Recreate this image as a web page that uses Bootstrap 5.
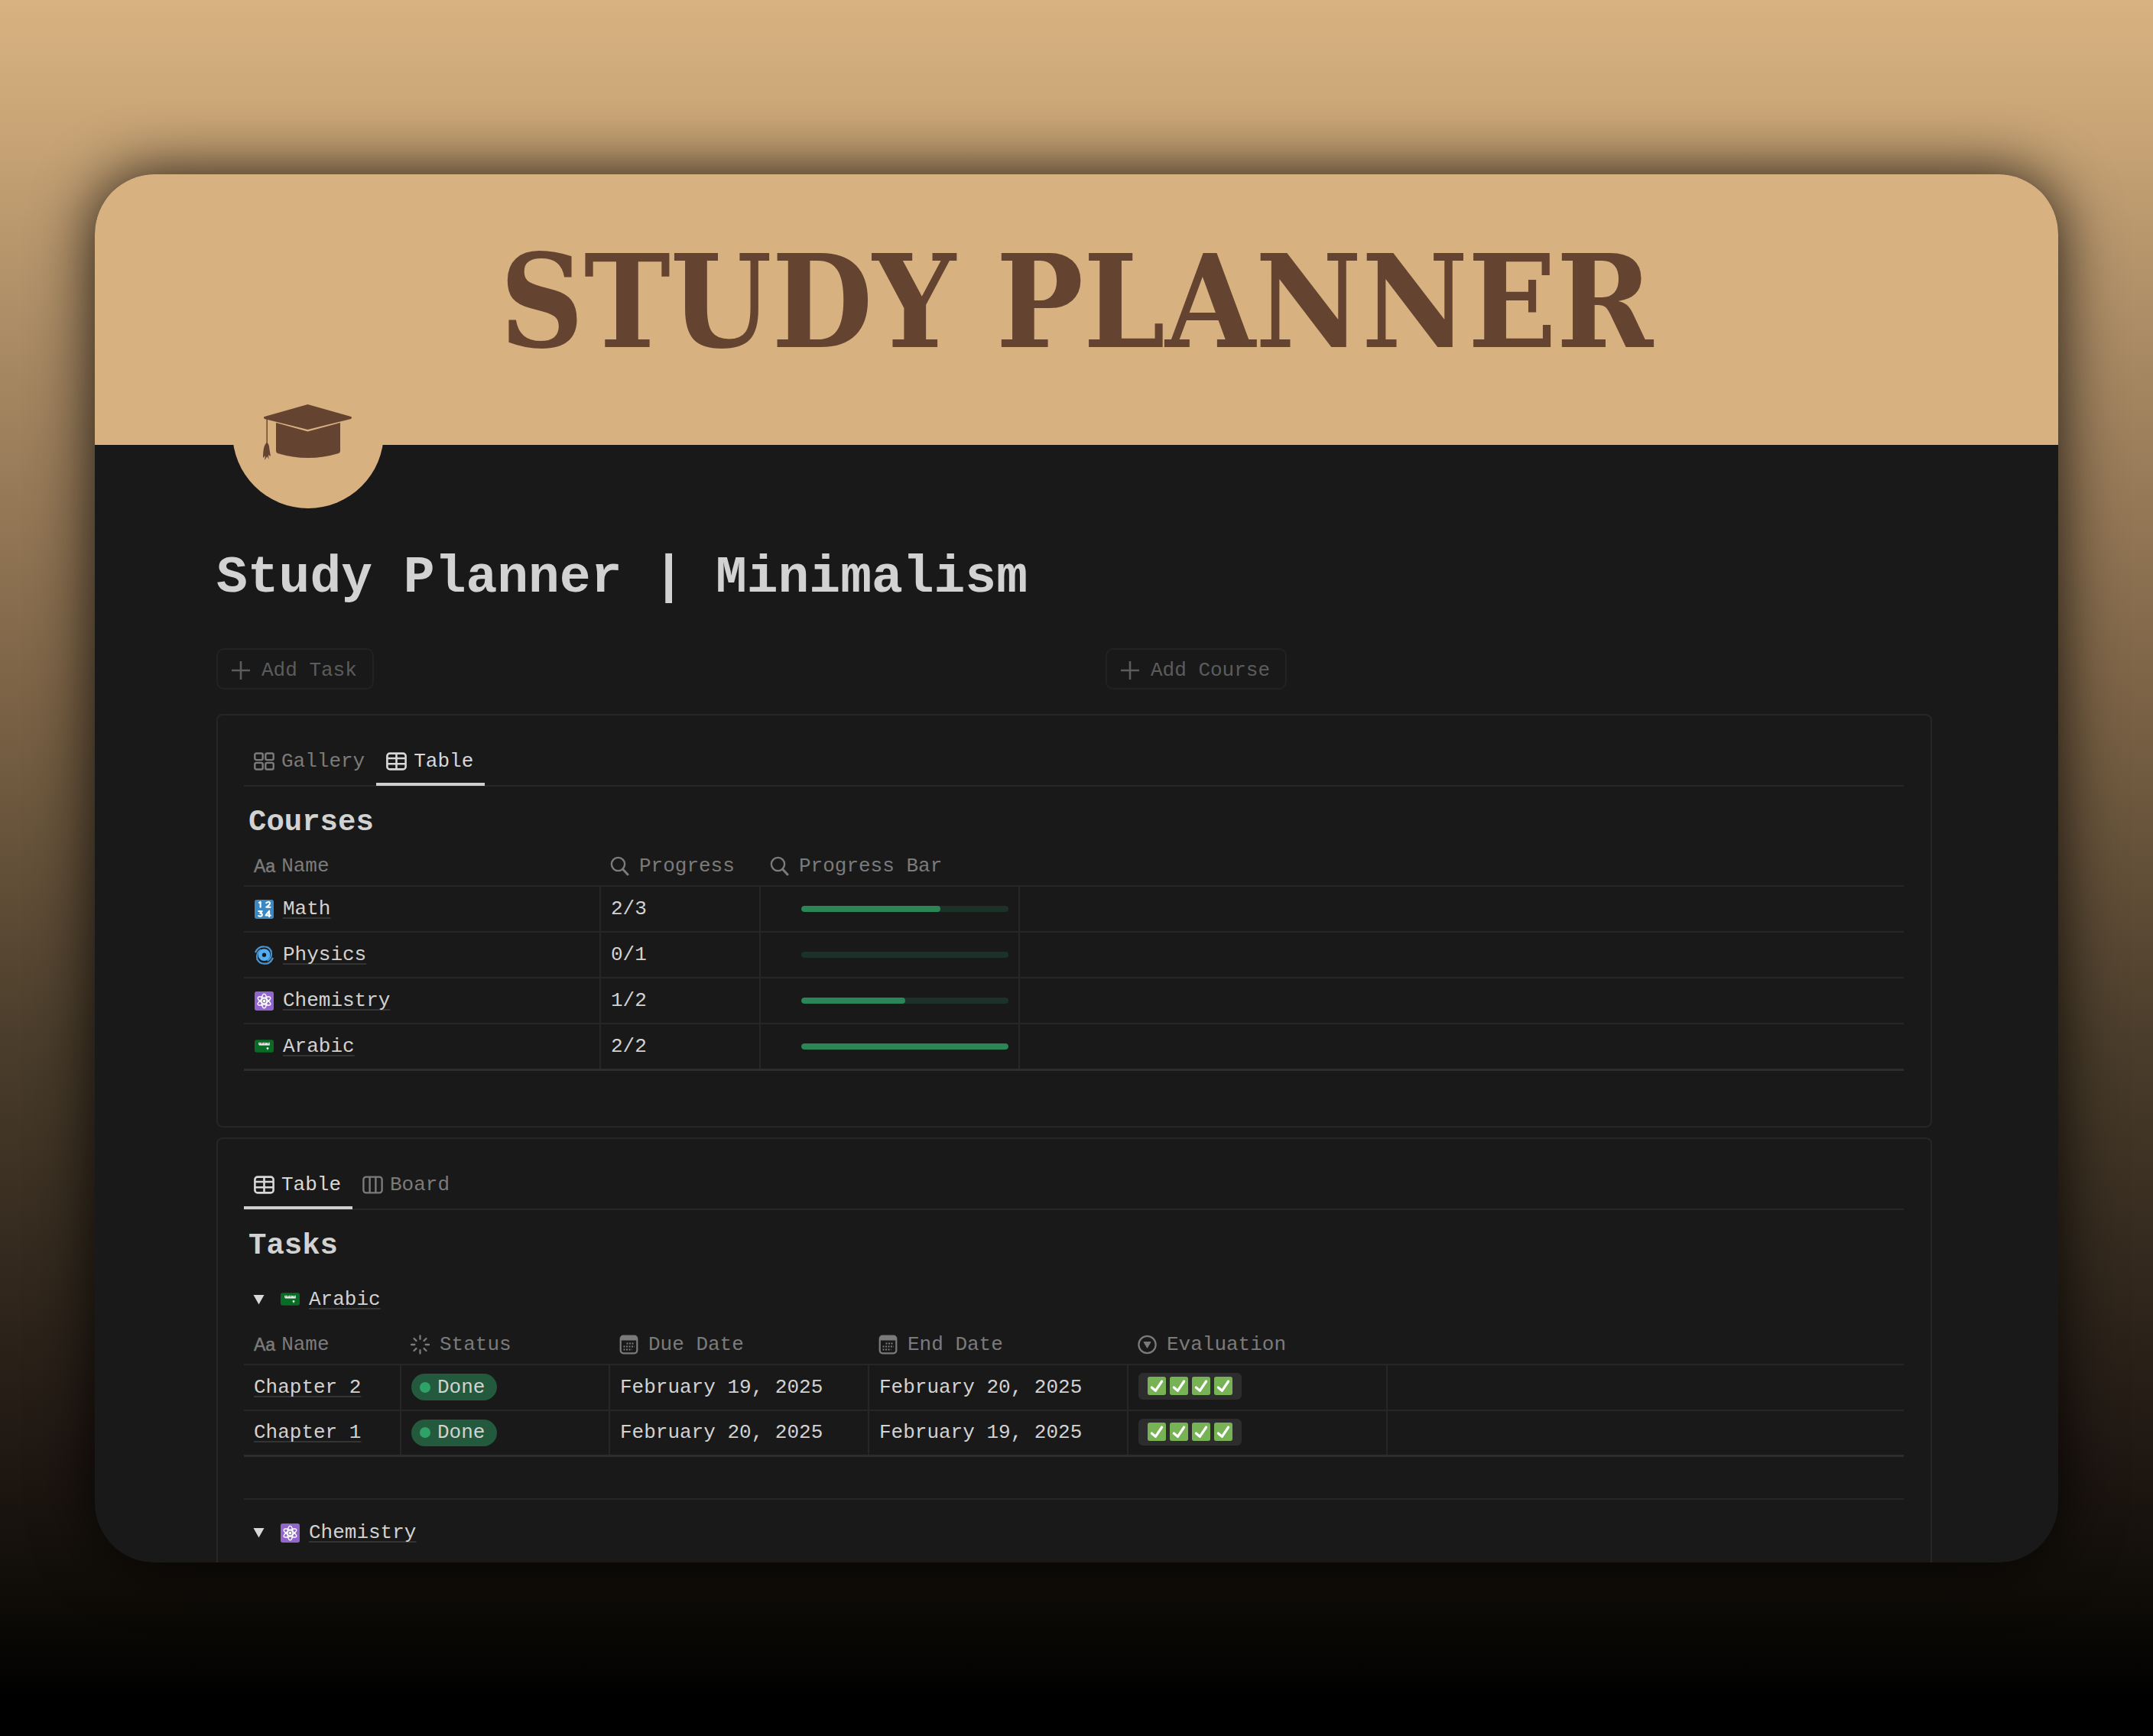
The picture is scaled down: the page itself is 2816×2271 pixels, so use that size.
<!DOCTYPE html>
<html lang="en">
<head>
<meta charset="utf-8">
<meta name="viewport" content="width=device-width, initial-scale=1">
<title>Study Planner | Minimalism</title>
<link rel="stylesheet" href="https://cdn.jsdelivr.net/npm/bootstrap@5.3.0/dist/css/bootstrap.min.css">
<style>
:root { --tan: #d7b180; --brown: #654331; --ink: #191919; --line: #262626; --muted: #7b7b7b; --txt: #d2d2d2; }
body {
  min-height: 100vh; padding: 228px 124px 229px; color: var(--txt);
  font: 26px/30px "Liberation Mono", monospace;
  background: #000 linear-gradient(180deg, #d8b281 0%, #c7a375 8%, #a98a64 20%, #7c6346 40%, #4a3d2b 60%, #1f1712 84%, #110e09 91%, #000 98%) no-repeat;
}
.window { background: var(--ink); border-radius: 78px; overflow: hidden; box-shadow: 0 0 80px rgba(0,0,0,.85); }
.cover { height: 354px; background: var(--tan); color: var(--brown); padding-top: 67px; font: bold 169px/200px "DejaVu Serif Condensed", "DejaVu Serif", serif; white-space: nowrap; }
.page { padding: 0 165px 0 159px; }
.page-icon { position: absolute; left: 180px; top: 239px; width: 198px; height: 198px; border-radius: 50%; background: var(--tan); }
h1 { font-size: 68px; line-height: 82px; font-weight: 700; margin: 133px 0 51px; }
h2 { font-size: 39px; line-height: 46px; font-weight: 700; margin: 24px 6px 0; }
.actions { gap: 82px; margin-bottom: 32px; }
.btn-add { --bs-btn-color: #5c5c5c; --bs-btn-border-color: #222; --bs-btn-hover-color: #999; --bs-btn-hover-border-color: #333; font-size: 26px; line-height: 30px; border-width: 2px; border-radius: 10px; padding: 12px 20px 8px 18px; gap: 15px; }
.panel { border: 2px solid var(--line); border-radius: 8px; padding: 45px 35px 72px 34px; margin-bottom: 13px; }
.panel-last { border-bottom: 0; border-radius: 8px 8px 0 0; padding-bottom: 24px; margin-bottom: 0; }
.views { border-bottom: 2px solid var(--line); }
.views .nav-link { display: flex; align-items: center; gap: 9px; color: var(--muted); padding: 0 15px 13px 13px; border: 0; border-bottom: 4px solid transparent; border-radius: 0; margin-bottom: -1px; }
.views .nav-link.active { color: #d8d8d8; border-bottom-color: #cfcfcf; }
.views svg { width: 27px; height: 24px; }
.db { --bs-table-bg: transparent; --bs-table-color: var(--txt); color: var(--txt); table-layout: fixed; margin: 0; border-color: var(--line); }
.db > :not(caption) > * > * { border: 0 solid var(--line); border-bottom-width: 2px; padding: 0 13px; vertical-align: middle; height: 60px; white-space: nowrap; }
.db > thead > tr > th { vertical-align: bottom; padding-bottom: 10px; color: var(--muted); font-weight: 400; }
.db > tbody > tr > td:not(:last-child) { border-right-width: 2px; }
.db > tbody > tr:last-child > td { border-bottom-width: 3px; border-bottom-color: #2d2d2d; }
.hd { display: flex; align-items: center; gap: 13px; }
.hd svg { width: 25px; height: 26px; }
.hd-name { gap: 8px; }
.hd-name i { font: 23px/30px "Liberation Sans", sans-serif; -webkit-text-stroke: .5px; }
.entry { display: flex; align-items: center; gap: 12px; }
.entry svg, .checks svg { width: 25px; height: 25px; }
.entry.course { padding-left: 1px; }
.page-link-text { color: var(--txt); text-decoration: underline #343434 2px; text-underline-offset: 4px; text-decoration-skip-ink: none; }
.course-bar { height: 8px; margin-left: 40px; background: #1c3127; border-radius: 5px; }
.course-bar .progress-bar { background: #2a8657; border-radius: 5px; }
.done { display: inline-flex; align-items: center; gap: 9px; height: 35px; padding: 0 16px 0 11px; border-radius: 18px; background: #235a3e; }
.done::before { content: ""; width: 14px; height: 14px; border-radius: 50%; background: #2fa367; }
.checks { display: inline-flex; align-items: center; gap: 5px; height: 35px; padding: 0 12px; border-radius: 6px; background: #2d2d2d; }
.checks svg { width: 24px; height: 24px; }
.group { margin: 32px 12px 10px; display: flex; align-items: center; gap: 21px; }
.group button { border: 0; background: none; padding: 0; width: 15px; display: flex; }
.divide { border-top: 2px solid var(--line); margin-top: 54px; padding-top: 28px; }
.divide .group { margin-top: 0; margin-bottom: 0; }
.w-name { width: 466px; } .w-prog { width: 209px; } .w-wide { width: 339px; } .w-task { width: 205px; } .w-stat { width: 273px; }
</style>
<script src="https://cdn.jsdelivr.net/npm/bootstrap@5.3.0/dist/js/bootstrap.bundle.min.js"></script>
</head>
<body>
<svg class="d-none" aria-hidden="true">
  <symbol id="i-plus" viewBox="0 0 24 24"><path d="M12 0v24M0 12h24" stroke="currentColor" stroke-width="2.6"/></symbol>
  <symbol id="i-gallery" viewBox="0 0 27 24"><g fill="none" stroke="currentColor" stroke-width="2.4"><rect x="1.3" y="1.5" width="10.4" height="8.6" rx="2"/><rect x="15.3" y="1.5" width="10.4" height="8.6" rx="2"/><rect x="1.3" y="13.9" width="10.4" height="8.6" rx="2"/><rect x="15.3" y="13.9" width="10.4" height="8.6" rx="2"/></g></symbol>
  <symbol id="i-table" viewBox="0 0 27 24"><g fill="none" stroke="currentColor" stroke-width="2.6"><rect x="1.4" y="1.6" width="24.2" height="20.8" rx="3.5"/><path d="M1.4 8h24.2M1.4 15.2h24.2M13.5 2v20"/></g></symbol>
  <symbol id="i-board" viewBox="0 0 27 24"><g fill="none" stroke="currentColor" stroke-width="2.4"><rect x="1.4" y="1.6" width="24.2" height="20.8" rx="3.5"/><path d="M9.6 2v20M17.4 2v20"/></g></symbol>
  <symbol id="i-search" viewBox="0 0 24 26"><circle cx="10" cy="10.5" r="8.6" fill="none" stroke="currentColor" stroke-width="2.4"/><path d="M16 17l6.5 7" stroke="currentColor" stroke-width="3" stroke-linecap="round"/></symbol>
  <symbol id="i-status" viewBox="0 0 26 26"><path d="M13 1v4.500M13 20.500V25M1 13h4.500M20.500 13H25M4.700 4.700l3 3M18.300 18.300l3 3M21.300 4.700l-3 3M7.700 18.300l-3 3" stroke="currentColor" stroke-width="2.400" stroke-linecap="round"/></symbol>
  <symbol id="i-date" viewBox="0 0 24 26"><rect x="1.200" y="1.700" width="21.600" height="22.600" rx="3.500" fill="none" stroke="currentColor" stroke-width="2.200"/><path d="M1 4.500Q1 1.500 4 1.500h16q3 0 3 3V7.500H1z" fill="currentColor"/><path d="M9 11.500h10.500M5 15.500h14.500M5 19.500h11" stroke="currentColor" stroke-width="2" stroke-dasharray="2 1.500"/></symbol>
  <symbol id="i-select" viewBox="0 0 26 26"><circle cx="13" cy="13" r="11.600" fill="none" stroke="currentColor" stroke-width="2.300"/><path d="M8.300 9.500h9.400L13 17.500z" fill="currentColor" stroke="currentColor" stroke-linejoin="round"/></symbol>
  <symbol id="i-down" viewBox="0 0 15 14"><path d="M.5 1h14L7.500 13.500z" fill="#d8d8d8"/></symbol>
  <symbol id="e-math" viewBox="0 0 36 36"><rect width="36" height="36" rx="4" fill="#3b88c3"/><g fill="none" stroke="#fff" stroke-width="3" stroke-linecap="round" stroke-linejoin="round"><path d="M8.500 5.500L11 4v10M22 6q5-4 7 0 0 3-7 8h7.500M7.500 21.500h6.500l-3.500 4q4.500 0 3.500 4-2.500 3-6.500 1M27.500 32V21L21 29.500h9"/></g></symbol>
  <symbol id="e-physics" viewBox="0 0 36 36"><g fill="none" stroke="#4a94d0" stroke-linecap="round"><circle cx="18" cy="17.500" r="7.600" stroke="#55acee" stroke-width="7.500"/><path d="M2 12Q7 1 18 2q9 0 13 8" stroke-width="3.200"/><path d="M34 24q-5 11-16 10-9 0-13-8" stroke-width="3.200"/><path d="M5 26Q2 14 11 8M31 10q3 12-6 18" stroke-width="3"/></g></symbol>
  <symbol id="e-chem" viewBox="0 0 36 36"><rect width="36" height="36" rx="4" fill="#9266cc"/><g fill="none" stroke="#fff" stroke-width="2.100"><ellipse cx="18" cy="18" rx="5" ry="13.500"/><ellipse cx="18" cy="18" rx="5" ry="13.500" transform="rotate(60 18 18)"/><ellipse cx="18" cy="18" rx="5" ry="13.500" transform="rotate(120 18 18)"/></g><circle cx="18" cy="18" r="2.500" fill="#fff"/></symbol>
  <symbol id="e-arabic" viewBox="0 0 36 36"><rect y="6" width="36" height="24" rx="4" fill="#096c24"/><path d="M8.500 11v4.500M11 11v4.500h3V12M16.500 11v4.500h3V11M22 15.500v-4M24.500 11.500v4h3V11M8.500 15.500h18M24.500 20v5M22.500 22h4" fill="none" stroke="#fff" stroke-width="1.800"/></symbol>
  <symbol id="e-check" viewBox="0 0 36 36"><rect width="36" height="36" rx="4" fill="#77b255"/><path d="M8 21l7.500 6.500L28 9" fill="none" stroke="#fff" stroke-width="4.800" stroke-linecap="round" stroke-linejoin="round"/></symbol>
</svg>

<main class="window position-relative">
  <header class="cover text-center">STUDY PLANNER</header>
  <div class="page-icon">
    <svg width="198" height="198" viewBox="0 0 198 198" aria-label="Graduation cap" role="img">
      <g fill="#654331"><path d="M98.500 62L155 78q2 1 0 3L98.500 95 42 81q-2-2 0-3z"/><path d="M57 86l41.500 11.500L141 86v37q0 2-2 3-40 12-80 0-2-1-2-3z"/><path d="M44.500 80h1.400v33h-1.400z"/><path d="M45 112q3 1 3.500 9l1.500 9-3-2 .5 6-2-4-3.500 5 1-6-3 3q0-17 5-20z"/></g>
    </svg>
  </div>
  <div class="page">
    <h1>Study Planner | Minimalism</h1>
    <div class="actions d-flex">
      <div class="flex-fill w-50"><button type="button" class="btn btn-add d-inline-flex align-items-center"><svg width="24" height="24"><use href="#i-plus"/></svg>Add Task</button></div>
      <div class="flex-fill w-50"><button type="button" class="btn btn-add d-inline-flex align-items-center"><svg width="24" height="24"><use href="#i-plus"/></svg>Add Course</button></div>
    </div>

    <section class="panel">
      <ul class="nav views">
        <li class="nav-item"><button type="button" class="nav-link bg-transparent"><svg><use href="#i-gallery"/></svg>Gallery</button></li>
        <li class="nav-item"><button type="button" class="nav-link bg-transparent active"><svg><use href="#i-table"/></svg>Table</button></li>
      </ul>
      <h2>Courses</h2>
      <table class="table db">
        <colgroup><col class="w-name"><col class="w-prog"><col class="w-wide"><col></colgroup>
        <thead><tr>
          <th scope="col"><span class="hd hd-name"><i>Aa</i>Name</span></th>
          <th scope="col"><span class="hd"><svg><use href="#i-search"/></svg>Progress</span></th>
          <th scope="col"><span class="hd"><svg><use href="#i-search"/></svg>Progress Bar</span></th>
          <th></th>
        </tr></thead>
        <tbody>
          <tr><td><span class="entry course"><svg><use href="#e-math"/></svg><a class="page-link-text" href="#">Math</a></span></td><td>2/3</td><td><div class="progress course-bar"><div class="progress-bar" style="width:67%"></div></div></td><td></td></tr>
          <tr><td><span class="entry course"><svg><use href="#e-physics"/></svg><a class="page-link-text" href="#">Physics</a></span></td><td>0/1</td><td><div class="progress course-bar"><div class="progress-bar" style="width:0%"></div></div></td><td></td></tr>
          <tr><td><span class="entry course"><svg><use href="#e-chem"/></svg><a class="page-link-text" href="#">Chemistry</a></span></td><td>1/2</td><td><div class="progress course-bar"><div class="progress-bar" style="width:50%"></div></div></td><td></td></tr>
          <tr><td><span class="entry course"><svg><use href="#e-arabic"/></svg><a class="page-link-text" href="#">Arabic</a></span></td><td>2/2</td><td><div class="progress course-bar"><div class="progress-bar" style="width:100%"></div></div></td><td></td></tr>
        </tbody>
      </table>
    </section>

    <section class="panel panel-last">
      <ul class="nav views">
        <li class="nav-item"><button type="button" class="nav-link bg-transparent active"><svg><use href="#i-table"/></svg>Table</button></li>
        <li class="nav-item"><button type="button" class="nav-link bg-transparent"><svg><use href="#i-board"/></svg>Board</button></li>
      </ul>
      <h2>Tasks</h2>
      <div class="group">
        <button type="button" aria-label="Toggle Arabic"><svg width="15" height="14"><use href="#i-down"/></svg></button>
        <span class="entry"><svg><use href="#e-arabic"/></svg><a class="page-link-text" href="#">Arabic</a></span>
      </div>
      <table class="table db">
        <colgroup><col class="w-task"><col class="w-stat"><col class="w-wide"><col class="w-wide"><col class="w-wide"><col></colgroup>
        <thead><tr>
          <th scope="col"><span class="hd hd-name"><i>Aa</i>Name</span></th>
          <th scope="col"><span class="hd"><svg><use href="#i-status"/></svg>Status</span></th>
          <th scope="col"><span class="hd"><svg><use href="#i-date"/></svg>Due Date</span></th>
          <th scope="col"><span class="hd"><svg><use href="#i-date"/></svg>End Date</span></th>
          <th scope="col"><span class="hd"><svg><use href="#i-select"/></svg>Evaluation</span></th>
          <th></th>
        </tr></thead>
        <tbody>
          <tr><td><a class="page-link-text" href="#">Chapter 2</a></td><td><span class="done">Done</span></td><td>February 19, 2025</td><td>February 20, 2025</td><td><span class="checks"><svg><use href="#e-check"/></svg><svg><use href="#e-check"/></svg><svg><use href="#e-check"/></svg><svg><use href="#e-check"/></svg></span></td><td></td></tr>
          <tr><td><a class="page-link-text" href="#">Chapter 1</a></td><td><span class="done">Done</span></td><td>February 20, 2025</td><td>February 19, 2025</td><td><span class="checks"><svg><use href="#e-check"/></svg><svg><use href="#e-check"/></svg><svg><use href="#e-check"/></svg><svg><use href="#e-check"/></svg></span></td><td></td></tr>
        </tbody>
      </table>
      <div class="divide">
        <div class="group">
          <button type="button" aria-label="Toggle Chemistry"><svg width="15" height="14"><use href="#i-down"/></svg></button>
          <span class="entry"><svg><use href="#e-chem"/></svg><a class="page-link-text" href="#">Chemistry</a></span>
        </div>
      </div>
    </section>
  </div>
</main>
</body>
</html>
